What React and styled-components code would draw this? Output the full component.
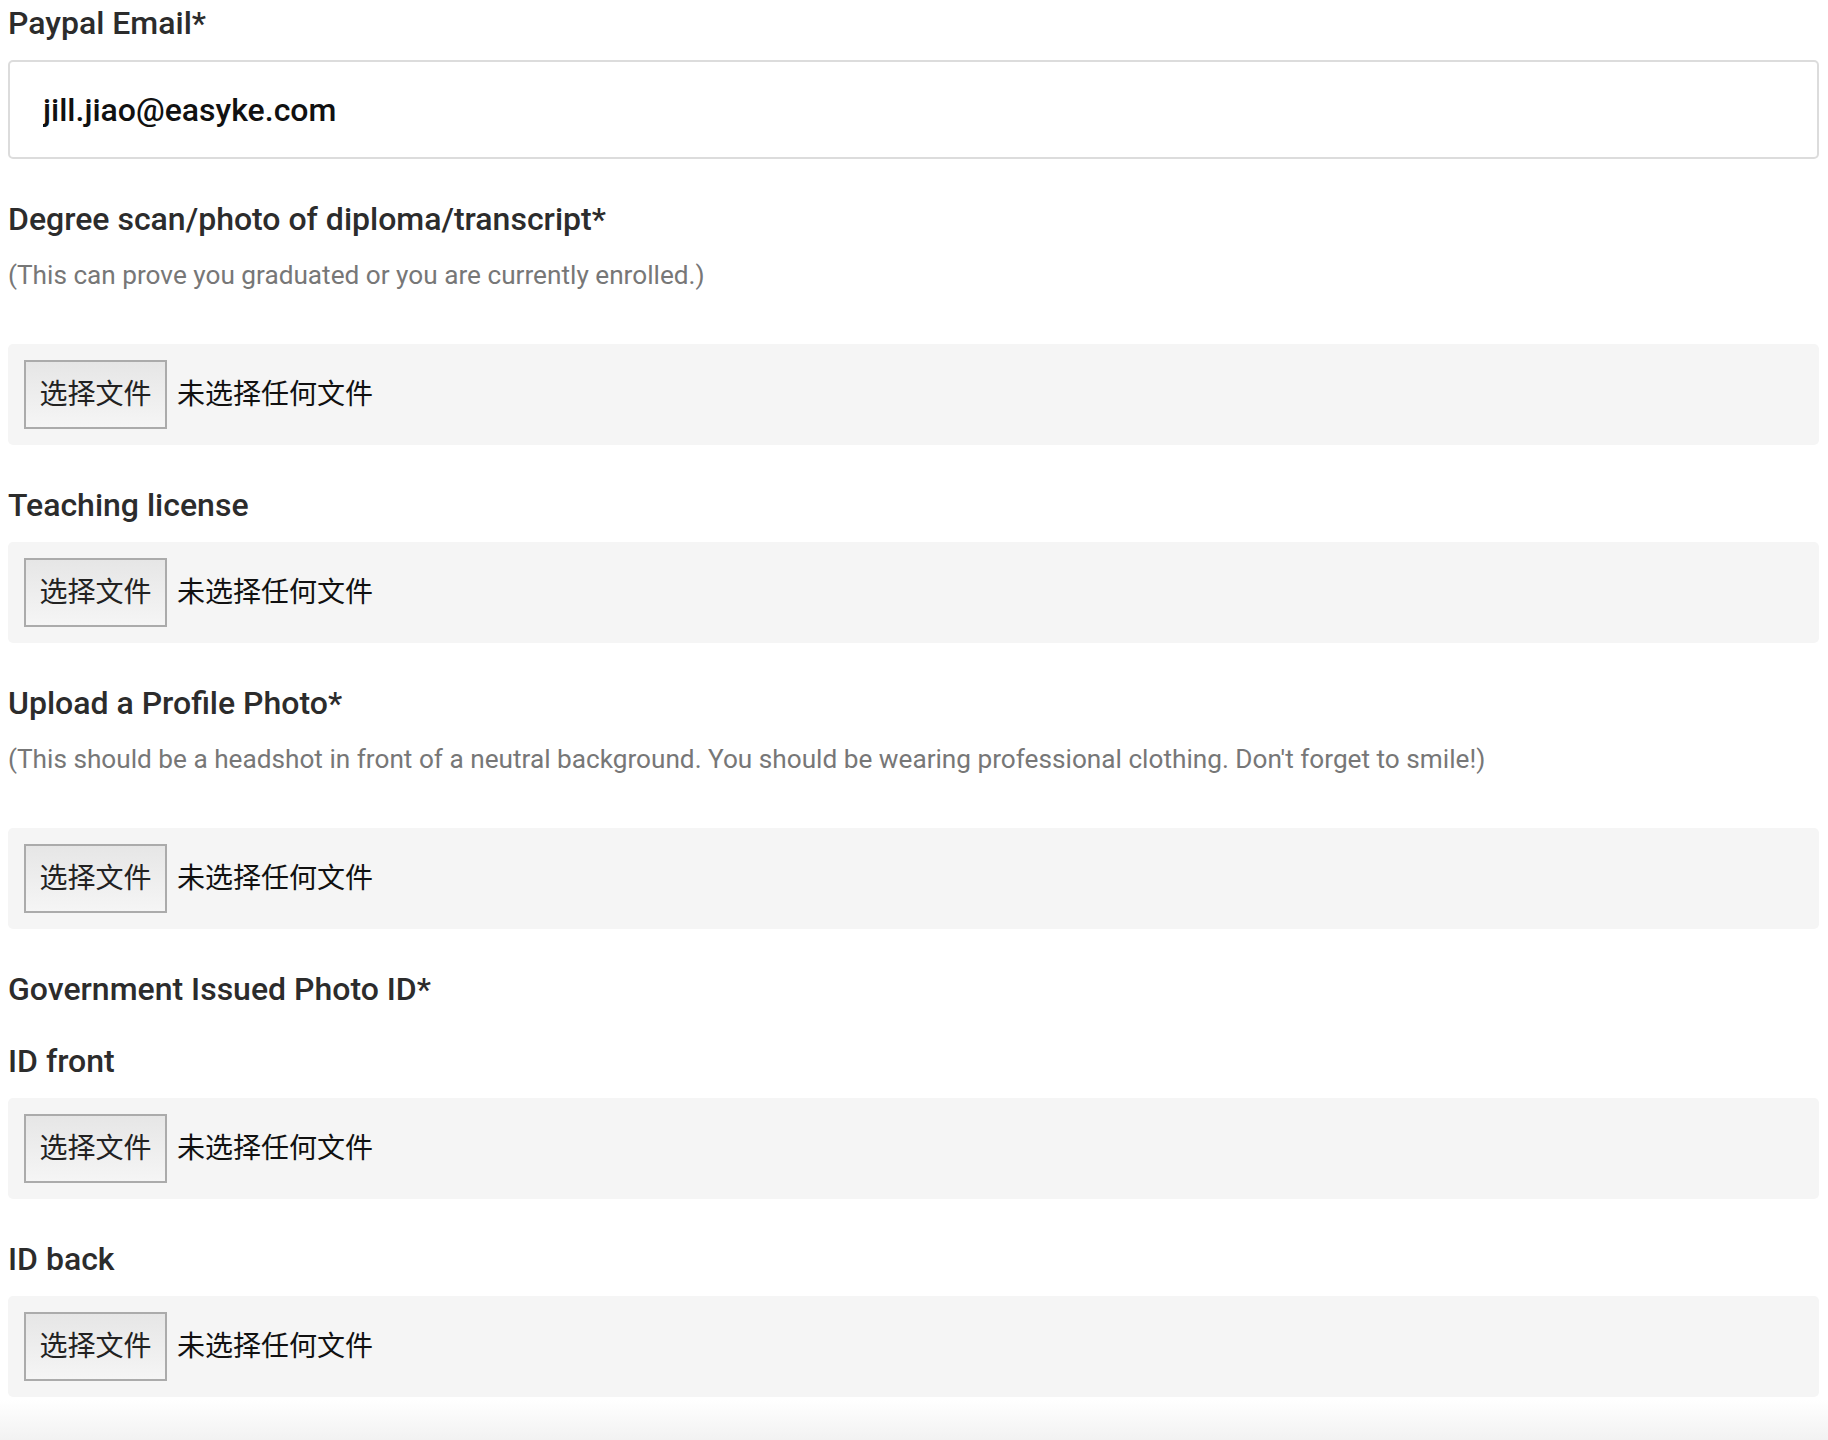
import React from "react";
import styled, { createGlobalStyle } from "styled-components";

const GlobalStyle = createGlobalStyle`
  html, body {
    margin: 0;
    padding: 0;
    background: #fff;
  }
  body {
    font-family: Roboto, "Noto Sans CJK SC", sans-serif;
  }
`;

const fields = [
  {
    label: "Degree scan/photo of diploma/transcript*",
    hint: "(This can prove you graduated or you are currently enrolled.)",
  },
  { label: "Teaching license" },
  {
    label: "Upload a Profile Photo*",
    hint: "(This should be a headshot in front of a neutral background. You should be wearing professional clothing. Don't forget to smile!)",
  },
];

const FilePicker = () => (
  <FileBox>
    <ChooseButton type="button">选择文件</ChooseButton>
    <FileName>未选择任何文件</FileName>
  </FileBox>
);

const App = () => {
  return (
    <>
      <GlobalStyle />
      <Page>
        <Label>Paypal Email*</Label>
        <EmailInput type="text" defaultValue="jill.jiao@easyke.com" />

        {fields.map((f) => (
          <Group key={f.label}>
            <Label>{f.label}</Label>
            {f.hint && <Hint>{f.hint}</Hint>}
            <FilePicker />
          </Group>
        ))}

        <Group>
          <Label $gap={36}>Government Issued Photo ID*</Label>
          <Label>ID front</Label>
          <FilePicker />
        </Group>

        <Group>
          <Label>ID back</Label>
          <FilePicker />
        </Group>
      </Page>
      <Fade />
    </>
  );
};

export default App;

const Page = styled.div`
  padding: 5px 8px 0;
  width: 1811px;
`;

const Group = styled.div`
  margin-top: 42px;
`;

const Label = styled.div`
  font-family: Roboto, sans-serif;
  font-size: 32px;
  font-weight: 500;
  line-height: 36px;
  color: #2c2c2c;
  margin-bottom: ${(p) => (p.$gap ? p.$gap : 19)}px;
`;

/* top margin collapses with the label's 19px bottom margin */
const Hint = styled.div`
  font-family: Roboto, sans-serif;
  font-size: 26.2px;
  line-height: 30px;
  color: #777;
  margin-top: 23px;
  margin-bottom: 54px;
`;

const EmailInput = styled.input`
  display: block;
  box-sizing: border-box;
  width: 100%;
  height: 99px;
  margin: 0;
  padding: 0 33px;
  border: 2px solid #dcdcdc;
  border-radius: 5px;
  background: #fff;
  font-family: Roboto, sans-serif;
  font-size: 32px;
  font-weight: 500;
  color: #111;
  outline: none;
`;

const FileBox = styled.div`
  display: flex;
  align-items: center;
  gap: 10px;
  box-sizing: border-box;
  height: 101px;
  padding: 0 16px;
  background: #f5f5f5;
  border-radius: 5px;
`;

const ChooseButton = styled.button`
  box-sizing: border-box;
  height: 69px;
  width: 143px;
  padding: 0 0 5px;
  border: 2px solid #ababab;
  background: linear-gradient(#e6e6e6, #f5f5f5);
  font-family: "Noto Sans CJK SC", sans-serif;
  font-size: 28px;
  color: #222;
`;

const FileName = styled.span`
  margin-bottom: 5px;
  font-family: "Noto Sans CJK SC", sans-serif;
  font-size: 28px;
  color: #111;
`;

const Fade = styled.div`
  height: 40px;
  margin-top: 3px;
  background: linear-gradient(#fff, #f2f2f2);
`;
